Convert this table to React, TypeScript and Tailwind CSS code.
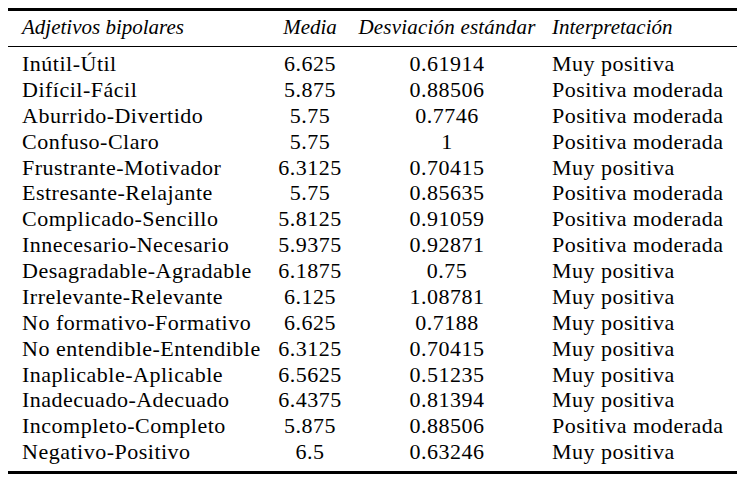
const rows: [string, string, string, string][] = [
  ["Inútil-Útil", "6.625", "0.61914", "Muy positiva"],
  ["Difícil-Fácil", "5.875", "0.88506", "Positiva moderada"],
  ["Aburrido-Divertido", "5.75", "0.7746", "Positiva moderada"],
  ["Confuso-Claro", "5.75", "1", "Positiva moderada"],
  ["Frustrante-Motivador", "6.3125", "0.70415", "Muy positiva"],
  ["Estresante-Relajante", "5.75", "0.85635", "Positiva moderada"],
  ["Complicado-Sencillo", "5.8125", "0.91059", "Positiva moderada"],
  ["Innecesario-Necesario", "5.9375", "0.92871", "Positiva moderada"],
  ["Desagradable-Agradable", "6.1875", "0.75", "Muy positiva"],
  ["Irrelevante-Relevante", "6.125", "1.08781", "Muy positiva"],
  ["No formativo-Formativo", "6.625", "0.7188", "Muy positiva"],
  ["No entendible-Entendible", "6.3125", "0.70415", "Muy positiva"],
  ["Inaplicable-Aplicable", "6.5625", "0.51235", "Muy positiva"],
  ["Inadecuado-Adecuado", "6.4375", "0.81394", "Muy positiva"],
  ["Incompleto-Completo", "5.875", "0.88506", "Positiva moderada"],
  ["Negativo-Positivo", "6.5", "0.63246", "Muy positiva"],
];

export default function App() {
  return (
    <div className="w-[745px] h-[481px] bg-white text-black pt-[8px] pl-[8px] font-['Liberation_Serif',serif]">
      <div className="w-[729px] text-[22px] tracking-[0.5px]">
        <div className="h-[3px] bg-black" />
        <div className="grid grid-cols-[268px_68px_206px_187px] pt-[4px] pb-[5px] italic h-[35px] leading-[25.875px] text-[21px] tracking-[0px]">
          <div className="pl-[14px] whitespace-nowrap">Adjetivos bipolares</div>
          <div className="text-center">Media</div>
          <div className="text-center whitespace-nowrap tracking-[0.2px]">Desviación estándar</div>
          <div className="pl-[2px]">Interpretación</div>
        </div>
        <div className="h-[1px] bg-black" />
        <div className="pt-[4px] pb-[6px]">
          {rows.map((r) => (
            <div key={r[0]} className="grid grid-cols-[268px_68px_206px_187px] h-[25.875px] leading-[25.875px]">
              <div className="pl-[14px] whitespace-nowrap">{r[0]}</div>
              <div className="text-center">{r[1]}</div>
              <div className="text-center">{r[2]}</div>
              <div className="pl-[2px] whitespace-nowrap">{r[3]}</div>
            </div>
          ))}
        </div>
        <div className="h-[3px] bg-black" />
      </div>
    </div>
  );
}
